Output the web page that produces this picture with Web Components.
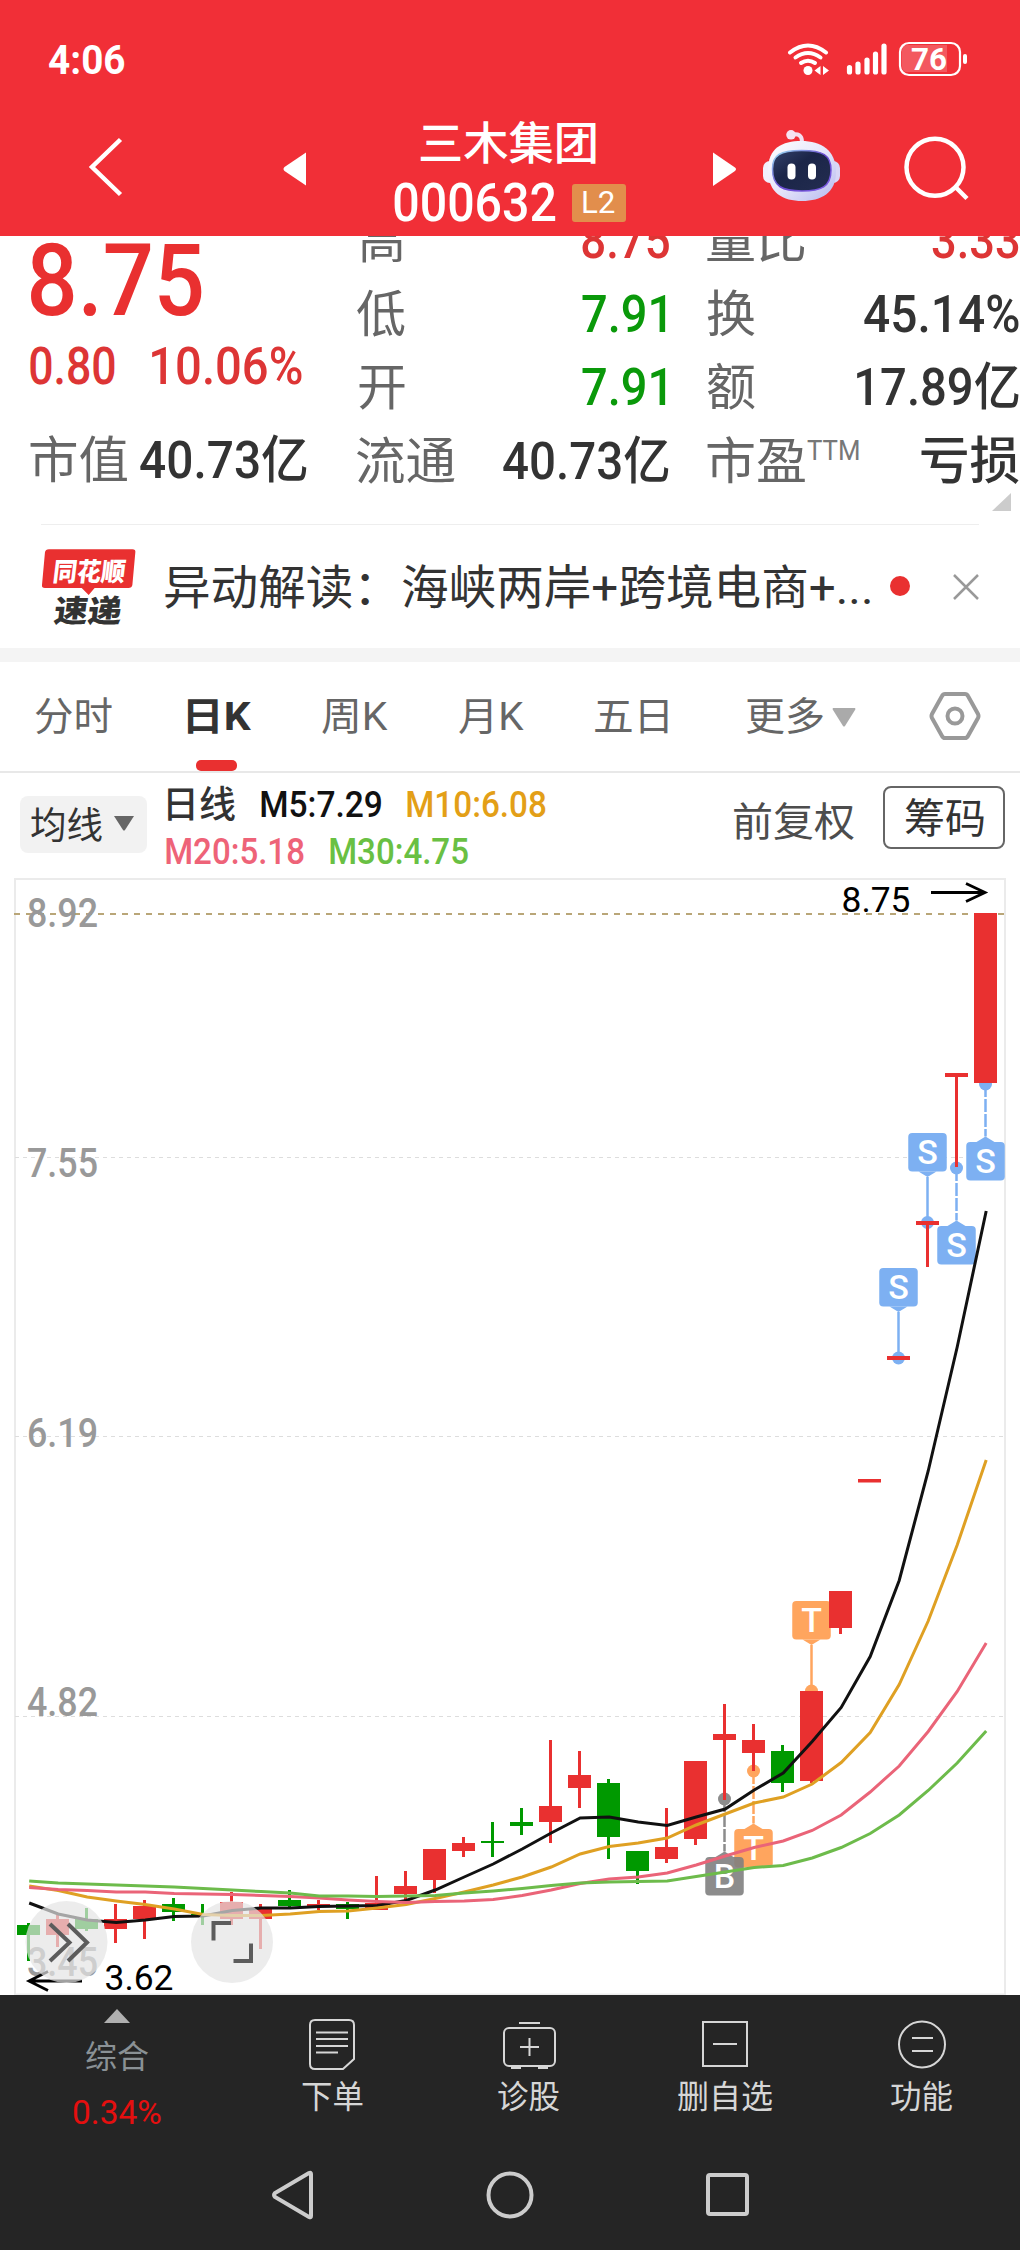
<!DOCTYPE html>
<html lang="zh-CN">
<head>
<meta charset="UTF-8">
<title>三木集团 000632</title>
<style>
    body {
        margin: 0;
        width: 1020px;
        background: #fff;
        font-family: Roboto, "Noto Sans CJK SC", sans-serif;
        color: #333;
    }
</style>
</head>
<body>
<stock-page></stock-page>

<script>
// Text squeezed or stretched so that its ink is exactly w pixels wide
const ruler = document.createElement("canvas").getContext("2d");
customElements.define("fit-text", class extends HTMLElement {
    connectedCallback() {
        this.attachShadow({mode: 'open'});
        const w = Number(this.getAttribute("w"));
        this.shadowRoot.innerHTML = `
            <style>
                :host {
                    display: inline-block;
                    flex: none;
                    width: ${w}px;
                    white-space: nowrap;
                }
                span {
                    display: block;
                    transform-origin: 0 50%;
                }
            </style>
            <span><slot></slot></span>
        `;
        const cs = getComputedStyle(this);
        ruler.font = `${cs.fontWeight} ${cs.fontSize} ${cs.fontFamily}`;
        const m = ruler.measureText(this.textContent);
        const k = w / (m.actualBoundingBoxRight + m.actualBoundingBoxLeft);
        this.shadowRoot.querySelector("span").style.transform =
            `translateX(${m.actualBoundingBoxLeft * k}px) scaleX(${k})`;
    }
});

customElements.define("status-bar", class extends HTMLElement {
    connectedCallback() {
        this.attachShadow({mode: 'open'});
        this.shadowRoot.innerHTML = `
            <style>
                :host {
                    display: flex;
                    justify-content: space-between;
                    height: 110px;
                    padding: 0 52px 0 49px;
                    box-sizing: border-box;
                    color: #fff;
                }
                fit-text {
                    font-size: 41px;
                    font-weight: 700;
                    line-height: 121px;
                }
                svg {
                    margin-top: 38px;
                }
            </style>
            <fit-text w="76">4:06</fit-text>
            <svg width="184" height="42" viewBox="784 38 184 42" fill="none" stroke="#fff" stroke-linecap="round">
                <path d="M790 52.500Q808 38.500 826 52.500" stroke-width="4"/>
                <path d="M795.500 57.500Q808 48.500 820.500 57.500" stroke-width="4"/>
                <path d="M801 63Q808 58.500 815 63" stroke-width="4"/>
                <circle cx="808" cy="70.500" r="4.500" fill="#fff" stroke="none"/>
                <path d="M820.500 66v9l-6-4.500zM823 66v9l6-4.500z" fill="#fff" stroke="none"/>
                <path d="M849.500 67.500V72M858 64V72M867 60V72M875.500 54V72M884 46V72" stroke-width="5.200"/>
                <path d="M907 45H947V72H907Q902 72 902 66V51Q902 45 907 45z" fill="#fff" fill-opacity=".2" stroke="none"/>
                <rect x="900" y="43" width="60" height="32" rx="9" stroke-width="2.200"/>
                <path d="M965 56V62" stroke-width="4"/>
                <text x="911" y="70.300" font-size="31" font-weight="700" fill="#fff" stroke="none" textLength="36" lengthAdjust="spacingAndGlyphs">76</text>
            </svg>
        `;
    }
});

customElements.define("title-bar", class extends HTMLElement {
    connectedCallback() {
        this.attachShadow({mode: 'open'});
        this.shadowRoot.innerHTML = `
            <style>
                :host {
                    display: flex;
                    height: 126px;
                    padding-left: 84px;
                    box-sizing: border-box;
                    color: #fff;
                }
                svg {
                    flex: none;
                }
                .name {
                    width: 232px;
                    margin: 0 81px 0 82px;
                    padding-top: 6px;
                    box-sizing: border-box;
                    display: flex;
                    flex-direction: column;
                    align-items: center;
                }
                .name > fit-text {
                    font-size: 45px;
                    font-weight: 500;
                    line-height: 58px;
                    margin-right: 4px;
                }
                .code {
                    display: flex;
                    align-items: center;
                    gap: 16px;
                    height: 58px;
                }
                .code > fit-text {
                    font-size: 53px;
                    font-weight: 500;
                    line-height: 54px;
                }
                .l2 {
                    width: 54px;
                    height: 38px;
                    border-radius: 3px;
                    background: #e28e4c;
                    display: flex;
                    justify-content: center;
                    font-size: 31px;
                    line-height: 37px;
                }
            </style>
            <svg width="228" height="126" viewBox="84 110 228 126" fill="#fff">
                <path d="M120.500 139.500L92 167L120.500 194.500" fill="none" stroke="#fff" stroke-width="4.500"/>
                <path d="M306 152.500V185.500L284.500 171Q282.500 169 284.500 167z"/>
            </svg>
            <div class="name">
                <fit-text w="176">三木集团</fit-text>
                <div class="code">
                    <fit-text w="162">000632</fit-text>
                    <div class="l2"><fit-text w="32">L2</fit-text></div>
                </div>
            </div>
            <svg width="313" height="126" viewBox="707 110 313 126" fill="#fff">
                <defs>
                    <linearGradient id="shell" x1="0" y1="0" x2="1" y2="1">
                        <stop offset="0" stop-color="#fff"/>
                        <stop offset=".5" stop-color="#e6e6fb"/>
                        <stop offset="1" stop-color="#b5b8ee"/>
                    </linearGradient>
                    <linearGradient id="visor" x1="0" y1="0" x2="1" y2="1">
                        <stop offset="0" stop-color="#34426c"/>
                        <stop offset=".4" stop-color="#1b2548"/>
                        <stop offset="1" stop-color="#232d50"/>
                    </linearGradient>
                    <linearGradient id="rim" x1="0" y1="0" x2="1" y2="1">
                        <stop offset="0" stop-color="#9fe6f5"/>
                        <stop offset=".5" stop-color="#6a4bd0"/>
                        <stop offset="1" stop-color="#7d5be6"/>
                    </linearGradient>
                </defs>
                <path d="M713 152.500V186L735 171Q737 169 735 167.500z"/>
                <path d="M791 135Q802 132 802 142" fill="none" stroke="#f3dff0" stroke-width="4"/>
                <circle cx="791" cy="134.800" r="4.800" fill="#f6e3f2"/>
                <rect x="763" y="161" width="14" height="22" rx="7" fill="#f1effd"/>
                <rect x="826" y="161" width="14" height="22" rx="7" fill="#d8d6f6"/>
                <path d="M768 170C768 148 782 141 801.500 141S836 150 836 172C836 193 821 201 802 201S768 193 768 170z" fill="url(#shell)"/>
                <path d="M772.500 169C772.500 155 780 150.500 801.500 150.500S831 155 831 170C831 187 821 191 802 191S772.500 187 772.500 169z" fill="url(#visor)" stroke="url(#rim)" stroke-width="1.500"/>
                <rect x="787.500" y="163.500" width="8" height="16" rx="4"/>
                <rect x="808" y="163.500" width="8" height="16" rx="4"/>
                <circle cx="935" cy="167.300" r="28.500" fill="none" stroke="#fff" stroke-width="4.500"/>
                <path d="M955.500 187L967 198.500" stroke="#fff" stroke-width="4.500"/>
            </svg>
        `;
    }
});

customElements.define("quote-panel", class extends HTMLElement {
    connectedCallback() {
        this.attachShadow({mode: 'open'});
        this.shadowRoot.innerHTML = `
            <style>
                :host {
                    display: block;
                    height: 289px;
                    overflow: hidden;
                }
                /* the list is scrolled up a little under the title bar */
                .cols {
                    display: grid;
                    grid-template-columns: 277px 312px 313px;
                    column-gap: 50px;
                    margin: -32px 0 0 30px;
                    height: 294px;
                    font-size: 51px;
                    font-weight: 500;
                }
                .cols > :last-child {
                    margin: 0 13px 0 -12px;
                }
                .row {
                    display: flex;
                    justify-content: space-between;
                    height: 73.500px;
                    line-height: 73.500px;
                }
                .k {
                    font-size: 50px;
                    line-height: 75px;
                    font-weight: 400;
                    color: #666;
                }
                .red { color: #dd3535; }
                .green { color: #0a990a; }
                .price {
                    height: 147px;
                    margin-left: 1px;
                    font-size: 101px;
                    line-height: 154px;
                    color: #e93030;
                }
                sup {
                    font-size: 27px;
                    line-height: 53px;
                    font-weight: 400;
                    margin-left: 2px;
                    color: #777;
                    vertical-align: top;
                }
                .corner {
                    display: block;
                    margin: -5px 9px 0 auto;
                }
                hr {
                    margin: 13px 41px 0;
                    border: 0;
                    border-top: 2px solid #eee;
                }
            </style>
            <div class="cols">
                <div>
                    <div class="price"><fit-text w="171">8.75</fit-text></div>
                    <div class="row red" style="height: 73px; line-height: 31px"><fit-text w="85">0.80</fit-text><fit-text w="150" style="margin-right: 5px">10.06%</fit-text></div>
                    <div class="row"><fit-text w="97" class="k">市值</fit-text><fit-text w="167">40.73亿</fit-text></div>
                </div>
                <div>
                    <div class="row red"><fit-text w="43" class="k" style="margin-left: 3px">高</fit-text><fit-text w="87">8.75</fit-text></div>
                    <div class="row green"><fit-text w="48" class="k">低</fit-text><fit-text w="84" style="margin-right: 3px">7.91</fit-text></div>
                    <div class="row green"><fit-text w="46" class="k" style="margin-left: 2px">开</fit-text><fit-text w="84" style="margin-right: 3px">7.91</fit-text></div>
                    <div class="row"><fit-text w="98" class="k">流通</fit-text><fit-text w="166">40.73亿</fit-text></div>
                </div>
                <div>
                    <div class="row red"><fit-text w="98" class="k">量比</fit-text><fit-text w="87">3.33</fit-text></div>
                    <div class="row"><fit-text w="48" class="k">换</fit-text><fit-text w="155">45.14%</fit-text></div>
                    <div class="row"><fit-text w="48" class="k">额</fit-text><fit-text w="162">17.89亿</fit-text></div>
                    <div class="row"><span class="k"><fit-text w="98">市盈</fit-text><sup><fit-text w="52">TTM</fit-text></sup></span><fit-text w="98">亏损</fit-text></div>
                </div>
            </div>
            <svg class="corner" width="19" height="18"><path d="M19 0V18H0z" fill="#ccc"/></svg>
            <hr>
        `;
    }
});

customElements.define("news-strip", class extends HTMLElement {
    connectedCallback() {
        this.attachShadow({mode: 'open'});
        this.shadowRoot.innerHTML = `
            <style>
                :host {
                    display: flex;
                    align-items: center;
                    height: 123px;
                    padding: 0 41px;
                    border-bottom: 14px solid #f4f4f4;
                }
                fit-text {
                    margin: 3px 0 0 28px;
                    font-size: 47px;
                    line-height: 60px;
                }
                i {
                    width: 20px;
                    height: 20px;
                    margin: 0 43px 2px 20px;
                    border-radius: 50%;
                    background: #e93030;
                }
            </style>
            <svg width="97" height="82" viewBox="41 545 97 82" font-weight="900">
                <path d="M49 548H133Q136.500 548 136 551L133 584Q132.500 587 129 587H95L89 594L82 587H45Q41.500 587 42 584L45 551Q45.500 548 49 548z" fill="#e93030"/>
                <text transform="translate(52 579.500) skewX(-7)" font-size="26" fill="#fff" textLength="73" lengthAdjust="spacingAndGlyphs">同花顺</text>
                <text transform="translate(53 621.500) skewX(-7)" font-size="31" fill="#333" textLength="68" lengthAdjust="spacingAndGlyphs">速递</text>
            </svg>
            <fit-text w="705">异动解读：海峡两岸+跨境电商+...</fit-text>
            <i></i>
            <svg width="26" height="26"><path d="M1 1L25 25M25 1L1 25" stroke="#999" stroke-width="2.500"/></svg>
        `;
    }
});

customElements.define("period-tabs", class extends HTMLElement {
    connectedCallback() {
        this.attachShadow({mode: 'open'});
        this.shadowRoot.innerHTML = `
            <style>
                :host {
                    display: flex;
                    height: 109px;
                    padding: 0 39px 0 35px;
                    border-bottom: 2px solid #e8e8e8;
                    font-size: 39px;
                    line-height: 111px;
                    color: #666;
                }
                .tab {
                    margin-right: 71px;
                }
                .on {
                    margin: 0 70px 0 5px;
                    font-weight: 700;
                    color: #333;
                    display: flex;
                    flex-direction: column;
                }
                .on::after {
                    content: "";
                    width: 41px;
                    height: 11px;
                    margin: -13px 0 0 8px;
                    border-radius: 5px;
                    background: #e93030;
                }
                .more {
                    margin: 46px 0 0 9px;
                }
                .gear {
                    margin: 29px 0 0 auto;
                }
            </style>
            <fit-text w="77" class="tab">分时</fit-text>
            <div class="on"><fit-text w="64">日K</fit-text></div>
            <fit-text w="66" class="tab">周K</fit-text>
            <fit-text w="65" class="tab">月K</fit-text>
            <fit-text w="73" class="tab" style="margin-right: 78px">五日</fit-text>
            <fit-text w="77">更多</fit-text>
            <svg class="more" width="24" height="19"><path d="M1 0H23Q24 1 23 2L13 18Q12 19 11 18L1 2Q0 1 1 0z" fill="#aaa"/></svg>
            <svg class="gear" width="52" height="50" viewBox="0 0 52 50" fill="none" stroke="#999" stroke-width="4">
                <path d="M16 3H36Q38 3 39 5L49 23Q50 25 49 27L39 45Q38 47 36 47H16Q14 47 13 45L3 27Q2 25 3 23L13 5Q14 3 16 3z"/>
                <circle cx="26" cy="25" r="7.500"/>
            </svg>
        `;
    }
});

customElements.define("ma-bar", class extends HTMLElement {
    connectedCallback() {
        this.attachShadow({mode: 'open'});
        this.shadowRoot.innerHTML = `
            <style>
                :host {
                    display: flex;
                    height: 105px;
                    padding: 0 15px 0 20px;
                    font-size: 37px;
                    font-weight: 500;
                }
                .pick {
                    display: flex;
                    align-items: center;
                    gap: 12px;
                    box-sizing: border-box;
                    width: 127px;
                    height: 57px;
                    margin-top: 23px;
                    padding: 0 0 3px 11px;
                    border-radius: 8px;
                    background: #f2f2f2;
                    font-weight: 400;
                }
                .values {
                    margin: 9px auto 0 18px;
                }
                .values div {
                    display: flex;
                    gap: 26px;
                    line-height: 46px;
                }
                .adj {
                    font-size: 40px;
                    font-weight: 400;
                    line-height: 99px;
                    color: #4d4d4d;
                }
                .chips {
                    box-sizing: border-box;
                    width: 122px;
                    height: 63px;
                    margin: 13px 0 0 29px;
                    border: 2px solid #666;
                    border-radius: 8px;
                    font-size: 41px;
                    font-weight: 400;
                    line-height: 62px;
                    text-align: center;
                }
            </style>
            <div class="pick">
                <fit-text w="71">均线</fit-text>
                <svg width="20" height="15"><path d="M0 0H20L11 14Q10 15 9 14z" fill="#666"/></svg>
            </div>
            <div class="values">
                <div><fit-text w="67" style="margin-left: 3px; line-height: 47px">日线</fit-text><fit-text w="120" style="color: #111">M5:7.29</fit-text><fit-text w="139" style="color: #e39f17">M10:6.08</fit-text></div>
                <div style="margin-left: 1px"><fit-text w="138" style="color: #ee6378">M20:5.18</fit-text><fit-text w="138" style="color: #69c043">M30:4.75</fit-text></div>
            </div>
            <fit-text w="120" class="adj">前复权</fit-text>
            <div class="chips"><fit-text w="79">筹码</fit-text></div>
        `;
    }
});

const RED = "#e93030", GREEN = "#009900";

// high, body top, body bottom, low (chart y), colour
const candles = [
    [1923, 1925, 1935, 1961, GREEN], [1915, 1919, 1935, 1947, RED], [1908, 1919, 1929, 1931, GREEN],
    [1904, 1919, 1929, 1943, RED], [1900, 1906, 1919, 1939, RED], [1898, 1904, 1912, 1921, GREEN],
    [1904, 1914, 1916, 1925, GREEN], [1892, 1902, 1919, 1925, RED], [1904, 1908, 1919, 1949, RED],
    [1890, 1900, 1906, 1909, GREEN], [1900, 1904, 1906, 1910, RED], [1902, 1904, 1909, 1919, GREEN],
    [1876, 1903, 1910, 1910, RED], [1871, 1886, 1894, 1900, RED], [1849, 1849, 1880, 1893, RED],
    [1837, 1843, 1851, 1857, RED], [1822, 1841, 1843, 1857, GREEN], [1808, 1822, 1826, 1835, GREEN],
    [1740, 1806, 1822, 1843, RED], [1751, 1775, 1788, 1808, RED], [1779, 1783, 1837, 1859, GREEN],
    [1851, 1851, 1871, 1884, GREEN], [1808, 1847, 1859, 1863, RED], [1761, 1761, 1839, 1845, RED],
    [1704, 1734, 1740, 1800, RED], [1724, 1740, 1753, 1771, RED], [1745, 1751, 1783, 1792, GREEN],
    [1691, 1691, 1781, 1783, RED], [1591, 1591, 1628, 1634, RED], [1479, 1479, 1482.5, 1482.5, RED],
    [1356, 1356, 1360, 1360, RED], [1221, 1221, 1225, 1267, RED], [1073, 1073, 1077, 1167, RED],
    [913, 913, 1083, 1083, RED]
];

const averages = {
    "#111111": [1903, 1914, 1920, 1922.5, 1920, 1916.5, 1916, 1910.5, 1908, 1908, 1906.5, 1906, 1905.5, 1900.5, 1890, 1877, 1864, 1849, 1833, 1818, 1817, 1822, 1825.5, 1817, 1809, 1790, 1773, 1741.5, 1707.5, 1656.5, 1580.5, 1471, 1347, 1211],
    "#dfa023": [1886, 1890.5, 1897, 1901, 1904.5, 1909, 1914.5, 1915.5, 1915.5, 1914, 1911.5, 1911, 1908, 1904.5, 1898.5, 1892, 1885, 1877, 1867, 1854, 1846.5, 1843, 1838, 1825, 1814, 1803, 1797, 1784, 1762.5, 1732.5, 1684.5, 1621, 1545, 1460],
    "#ea6478": [1887.5, 1889.5, 1890.5, 1892, 1892, 1893.5, 1894, 1894.5, 1895.5, 1896.5, 1898, 1900, 1901.5, 1902.5, 1901.5, 1901, 1899.5, 1895.5, 1890, 1883.5, 1879, 1877, 1873, 1865, 1856, 1847.5, 1841, 1830.5, 1815, 1792, 1766, 1731.5, 1691.5, 1643],
    "#6dbb4b": [1881, 1883, 1884, 1885, 1886, 1887, 1888.5, 1890, 1891.5, 1893, 1896, 1896, 1896.5, 1896, 1895.5, 1893, 1891, 1888.5, 1885.5, 1883, 1882, 1881.5, 1881, 1876.5, 1872, 1867.5, 1865.5, 1858, 1847.5, 1833.5, 1815, 1790.5, 1763, 1731]
};

// candle index, letter, box top, dot y, colour
const marks = [
    [25, "T", 1829, 1771, "#ffa55e"], [24, "B", 1857, 1799, "#808080"], [27, "T", 1601, 1691, "#ffa55e"],
    [30, "S", 1268, 1358, "#7db0f2"], [31, "S", 1133, 1222.5, "#7db0f2"],
    [32, "S", 1226, 1168, "#7db0f2"], [33, "S", 1142, 1084, "#7db0f2"]
];

const cx = i => 28.5 + i * 29;

function drawMark([i, letter, top, dot, color]) {
    const x = cx(i), below = top > dot;
    const edge = below ? top : top + 38.5;
    const tip = below ? edge - 5.5 : edge + 5.5;
    return `
        <g fill="${color}" ${letter == "B" ? 'opacity=".9"' : ''}>
            <circle cx="${x}" cy="${dot}" r="6.5"/>
            <path d="M${x} ${dot}V${tip}" stroke="${color}" stroke-width="2.5" ${below ? 'stroke-dasharray="13 2"' : ''}/>
            <path d="M${x - 9} ${edge}L${x} ${tip}L${x + 9} ${edge}z"/>
            <rect x="${x - 19.25}" y="${top}" width="38.5" height="38.5" rx="4"/>
            <text x="${x}" y="${top + 30.5}" font-size="34" font-weight="500" fill="#fff" text-anchor="middle">${letter}</text>
        </g>`;
}

function drawCandle([high, top, bottom, low, color], i) {
    const x = cx(i);
    return `<path d="M${x - 1.5} ${high}h3V${low}h-3zM${x - 11.5} ${top}h23V${bottom}h-23z" fill="${color}"/>`;
}

customElements.define("k-chart", class extends HTMLElement {
    connectedCallback() {
        this.attachShadow({mode: 'open'});
        const label = (text, x, y, w, size, fill, weight) =>
            `<text x="${x}" y="${y}" font-size="${size}" font-weight="${weight}" fill="${fill}" textLength="${w}" lengthAdjust="spacingAndGlyphs">${text}</text>`;
        this.shadowRoot.innerHTML = `
            <style>
                :host {
                    display: block;
                    height: 1117px;
                }
                svg {
                    display: block;
                }
            </style>
            <svg width="1020" height="1117" viewBox="0 878 1020 1117">
                <rect x="15" y="879" width="990" height="1115.5" fill="none" stroke="#ebebeb" stroke-width="2"/>
                <path d="M15 1157.5H1004M15 1436.500H1004M15 1716.500H1004" stroke="#ddd" stroke-dasharray="4 4"/>
                <path d="M14 914H1005" stroke="#b9a678" stroke-width="1.800" stroke-dasharray="6 6"/>
                ${label("8.92", 27, 926.5, 71, 41, "#999", 500)}
                ${label("7.55", 27, 1177, 71, 41, "#999", 500)}
                ${label("6.19", 27, 1447, 71, 41, "#999", 500)}
                ${label("4.82", 27, 1716, 71, 41, "#999", 500)}
                ${label("3.45", 27, 1976, 71, 41, "#999", 500)}
                ${marks.map(drawMark).join("")}
                ${candles.map(drawCandle).join("")}
                ${Object.entries(averages).map(([color, ys]) =>
                    `<polyline points="${ys.map((y, i) => `${cx(i) + .7},${y}`).join(" ")}" fill="none" stroke="${color}" stroke-width="3"/>`).join("")}
                ${label("8.75", 841.5, 911.5, 69, 35, "#000", 400)}
                <path d="M931 892.500H985M966 883.500L985 892.500L966 901.500" fill="none" stroke="#000" stroke-width="2.800"/>
                ${label("3.62", 104.5, 1990, 69, 35, "#000", 400)}
                <path d="M82 1981H29M48 1971.500L29 1981L48 1990.500" fill="none" stroke="#000" stroke-width="2.800"/>
                <circle cx="66.500" cy="1942" r="41" fill="#e4e4e4" fill-opacity=".7"/>
                <circle cx="232" cy="1942" r="41" fill="#e4e4e4" fill-opacity=".7"/>
                <path d="M50 1924L69.500 1942.500L50 1961M68 1924L87 1942.500L68 1961M231 1923H213.500V1940.500M251 1943.500V1961H233.500" fill="none" stroke="#5c5c5c" stroke-width="4"/>
            </svg>
        `;
    }
});

customElements.define("tool-item", class extends HTMLElement {
    connectedCallback() {
        this.attachShadow({mode: 'open'});
        this.shadowRoot.innerHTML = `
            <style>
                :host {
                    display: flex;
                    flex-direction: column;
                    align-items: center;
                    padding-top: 21px;
                    font-size: 32px;
                    line-height: 44px;
                    color: #d6d6d6;
                }
                ::slotted(svg) {
                    margin-bottom: 3px;
                }
            </style>
            <slot></slot>
        `;
    }
});

customElements.define("bottom-bar", class extends HTMLElement {
    connectedCallback() {
        this.attachShadow({mode: 'open'});
        this.shadowRoot.innerHTML = `
            <style>
                :host {
                    display: block;
                    height: 255px;
                    background: #252525;
                }
                .tools {
                    display: grid;
                    grid-template-columns: 234px repeat(4, 196.500px);
                    height: 145px;
                }
                .index {
                    display: flex;
                    flex-direction: column;
                    align-items: center;
                    padding-top: 14px;
                    font-size: 32px;
                    color: #8a9195;
                }
                .index fit-text {
                    line-height: 55px;
                }
                .index svg {
                    margin-bottom: 7px;
                }
                .keys {
                    display: grid;
                    grid-template-columns: repeat(3, 217px);
                    justify-items: center;
                    margin: 29px 0 0 184px;
                }
            </style>
            <div class="tools">
                <div class="index">
                    <svg width="26" height="14"><path d="M0 14L13 0L26 14z" fill="#b0b0b0"/></svg>
                    <fit-text w="62">综合</fit-text>
                    <fit-text w="88" style="color: #e50f0f; font-size: 34px">0.34%</fit-text>
                </div>
                <tool-item>
                    <svg width="56" height="56" viewBox="0 0 56 56" fill="none" stroke="#d6d6d6" stroke-width="2">
                        <path d="M11 4H45Q50 4 50 9V43L39 53H11Q6 53 6 48V9Q6 4 11 4z"/>
                        <path d="M12 16.500H44M12 23H44M12 30H44M12 36.500H34"/>
                    </svg>
                    <fit-text w="61">下单</fit-text>
                </tool-item>
                <tool-item>
                    <svg width="56" height="56" viewBox="0 0 56 56" fill="none" stroke="#d6d6d6" stroke-width="2">
                        <rect x="3" y="12" width="51" height="38" rx="5"/>
                        <path d="M18 7H39M28.500 22V40M19 31H38M10 52H20M37 52H47"/>
                    </svg>
                    <fit-text w="61">诊股</fit-text>
                </tool-item>
                <tool-item>
                    <svg width="56" height="56" viewBox="0 0 56 56" fill="none" stroke="#d6d6d6" stroke-width="2">
                        <path d="M6 6H50V50H6zM16 28H40"/>
                    </svg>
                    <fit-text w="94">删自选</fit-text>
                </tool-item>
                <tool-item>
                    <svg width="56" height="56" viewBox="0 0 56 56" fill="none" stroke="#d6d6d6" stroke-width="2">
                        <circle cx="28" cy="28.500" r="23"/>
                        <path d="M18 22H39M18 35H39"/>
                    </svg>
                    <fit-text w="61">功能</fit-text>
                </tool-item>
            </div>
            <div class="keys">
                <svg width="48" height="52" fill="none" stroke="#ccc" stroke-width="4"><path d="M42 5V47Q42 49 40 48L6 28Q4 26 6 24L40 4Q42 3 42 5z"/></svg>
                <svg width="50" height="52" fill="none" stroke="#ccc" stroke-width="4"><circle cx="25" cy="26" r="21.500"/></svg>
                <svg width="50" height="52" fill="none" stroke="#ccc" stroke-width="4"><rect x="6" y="6" width="39" height="39" rx="2"/></svg>
            </div>
        `;
    }
});

customElements.define("stock-page", class extends HTMLElement {
    connectedCallback() {
        this.attachShadow({mode: 'open'});
        this.shadowRoot.innerHTML = `
            <style>
                :host {
                    display: block;
                    width: 1020px;
                    height: 2250px;
                    overflow: hidden;
                }
                header {
                    background: #f12f37;
                }
            </style>
            <header>
                <status-bar></status-bar>
                <title-bar></title-bar>
            </header>
            <quote-panel></quote-panel>
            <news-strip></news-strip>
            <period-tabs></period-tabs>
            <ma-bar></ma-bar>
            <k-chart></k-chart>
            <bottom-bar></bottom-bar>
        `;
    }
});
</script>
</body>
</html>
